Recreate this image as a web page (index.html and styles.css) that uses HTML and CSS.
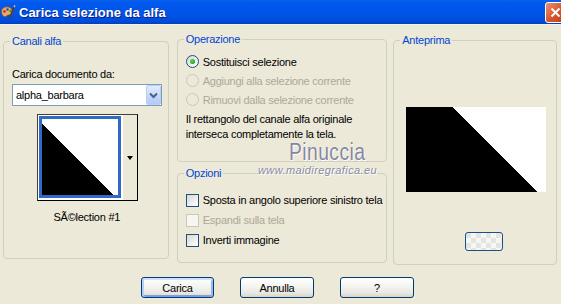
FILE: index.html
```html
<!DOCTYPE html>
<html lang="it">
<head>
  <meta charset="UTF-8" />
  <title>Carica selezione da alfa</title>
  <link rel="stylesheet" href="styles.css">
</head>
<body>
<div class="window">

  <div class="titlebar">
    <svg class="app-icon" width="16" height="16" viewBox="0 0 16 16">
      <path d="M1.5 9 C0.5 5 4.5 2 8.5 3 C12.5 4 13.5 8 11.5 10 C9.5 12 8.5 10 6.5 12 C4.5 14 2.5 12 1.5 9Z" fill="#e6ac6a" stroke="#7a4a20" stroke-width="0.8"/>
      <circle cx="4.5" cy="7.5" r="1.3" fill="#d42020"/>
      <circle cx="7.5" cy="5.5" r="1.3" fill="#2050d0"/>
      <circle cx="10.5" cy="7" r="1.2" fill="#1fa01f"/>
      <path d="M9.5 14 L14.5 2" stroke="#5a3a1a" stroke-width="1.6"/>
      <path d="M14 1 L15.5 1.5 L14.8 3.5 L13.6 3Z" fill="#c0c0c0"/>
    </svg>
    <span class="title">Carica selezione da alfa</span>
    <div class="close-btn">
      <svg width="11" height="11" viewBox="0 0 11 11"><path d="M1.5 1.5L9.5 9.5M9.5 1.5L1.5 9.5" stroke="#fff" stroke-width="2"/></svg>
    </div>
  </div>

  <div class="client">
    <div class="columns">

      <!-- Canali alfa -->
      <fieldset class="group channels">
        <legend>Canali alfa</legend>
        <div class="field-label">Carica documento da:</div>
        <div class="combo">
          <span class="combo-text">alpha_barbara</span>
          <span class="combo-btn">
            <svg width="15" height="20" viewBox="0 0 15 20"><path d="M4 8.5 L7.5 12 L11 8.5" fill="none" stroke="#4d6185" stroke-width="2"/></svg>
          </span>
        </div>
        <div class="thumb">
          <div class="thumb-pick">
            <svg class="thumb-img" width="76" height="76" viewBox="0 0 76 76" shape-rendering="crispEdges">
              <rect width="76" height="76" fill="#fff"/>
              <polygon points="0,5 71,76 0,76" fill="#000"/>
            </svg>
          </div>
          <div class="thumb-drop"><span class="arrow"></span></div>
        </div>
        <div class="thumb-caption">SÃ©lection #1</div>
      </fieldset>

      <div class="middle">
        <!-- Operazione -->
        <fieldset class="group operation">
          <legend>Operazione</legend>
          <div class="option first"><span class="radio checked"></span>Sostituisci selezione</div>
          <div class="option disabled"><span class="radio"></span>Aggiungi alla selezione corrente</div>
          <div class="option disabled"><span class="radio"></span>Rimuovi dalla selezione corrente</div>
          <p class="note">Il rettangolo del canale alfa originale<br>interseca completamente la tela.</p>
        </fieldset>

        <!-- Opzioni -->
        <fieldset class="group options">
          <legend>Opzioni</legend>
          <div class="check-row first"><span class="check"></span>Sposta in angolo superiore sinistro tela</div>
          <div class="check-row disabled"><span class="check"></span>Espandi sulla tela</div>
          <div class="check-row"><span class="check"></span>Inverti immagine</div>
        </fieldset>
      </div>

      <!-- Anteprima -->
      <fieldset class="group preview">
        <legend>Anteprima</legend>
        <svg class="preview-img" width="140" height="85" viewBox="0 0 140 85" shape-rendering="crispEdges">
          <rect width="140" height="85" fill="#fff"/>
          <polygon points="0,0 46,0 131,85 0,85" fill="#000"/>
        </svg>
        <div class="bg-btn"></div>
      </fieldset>
    </div>

    <div class="buttons">
      <button class="btn default">Carica</button>
      <button class="btn wide">Annulla</button>
      <button class="btn wide">?</button>
    </div>
  </div>

  <div class="watermark">
    <div class="wm-name">Pinuccia</div>
    <div class="wm-url">www.maidiregrafica.eu</div>
  </div>

</div>
</body>
</html>
```

FILE: styles.css
```css
body {
  margin: 0;
  background: #ece9d8;
  font-family: "Liberation Sans", Arial, sans-serif;
  font-size: 11px;
  letter-spacing: -0.25px;
  color: #000;
}

.window {
  position: relative;
  width: 561px;
  height: 304px;
  overflow: hidden;
}

/* title bar */
.titlebar {
  height: 25px;
  display: flex;
  align-items: center;
  overflow: hidden;
  background: linear-gradient(to bottom, #0b62ee 0%, #0058ee 12%, #0055e8 55%, #004bd9 88%, #003fc2 100%);
  border-bottom: 1px solid #f4f2e8;
  box-sizing: border-box;
}

.app-icon {
  display: block;
  margin-right: 3px;
}

.title {
  color: #fff;
  font-weight: bold;
  font-size: 13px;
  letter-spacing: 0;
  text-shadow: 1px 1px #0c1b8a;
}

.close-btn {
  margin-left: auto;
  margin-right: -5px;
  width: 21px;
  height: 21px;
  box-sizing: border-box;
  border: 1px solid #fff;
  border-radius: 3px;
  background: linear-gradient(135deg, #ec9272, #d8532b 55%, #bd3d16);
  display: flex;
  align-items: center;
  justify-content: center;
}

/* dialog body */
.client {
  padding: 8px 4px 0 3px;
}

.columns {
  display: flex;
  align-items: flex-start;
}

.group {
  margin: 0;
  padding: 0 8px;
  border: 1px solid #d0d0bf;
  border-radius: 4px;
  box-sizing: border-box;
  min-width: 0;
}

.group legend {
  color: #0046d5;
  padding: 0 2px;
  margin-left: -2px;
  line-height: 13px;
}

.channels {
  width: 166px;
  height: 224px;
  margin-top: 2px;
  padding-right: 6px;
}

.middle {
  width: 211px;
  margin-left: 8px;
  display: flex;
  flex-direction: column;
}

.operation {
  height: 129px;
}

.options {
  height: 96px;
  margin-top: 5px;
  padding-right: 2px;
}

.preview {
  width: 164px;
  height: 231px;
  margin-left: 6px;
  margin-top: 1px;
}

/* canali alfa */
.field-label {
  margin-top: 20px;
  line-height: 13px;
}

.combo {
  margin-top: 3px;
  height: 22px;
  box-sizing: border-box;
  border: 1px solid #7f9db9;
  background: #fff;
  display: flex;
  align-items: center;
}

.combo-text {
  flex: 1;
  padding-left: 3px;
}

.combo-btn {
  width: 15px;
  height: 20px;
  box-sizing: border-box;
  border: 1px solid #b8cdf8;
  border-radius: 2px;
  background: linear-gradient(to bottom, #e3ecfe, #c3d5fc 60%, #b3c9f8);
}

.combo-btn svg {
  display: block;
  margin: -1px 0 0 -1px;
}

.thumb {
  margin: 8px 0 0 25px;
  width: 101px;
  height: 87px;
  box-sizing: border-box;
  display: flex;
  border: 1px solid #000;
  border-color: #404040 #000 #000 #404040;
}

.thumb-pick {
  background: #fff;
  padding: 1px 1px 2px 1px;
}

.thumb-img {
  display: block;
  border: 3px solid #316ac5;
}

.thumb-drop {
  flex: 1;
  background: #ece9d8;
  border-left: 1px solid #fff;
  display: flex;
  align-items: center;
  justify-content: center;
}

.arrow {
  width: 0;
  height: 0;
  border-left: 3.5px solid transparent;
  border-right: 3.5px solid transparent;
  border-top: 4px solid #000;
}

.thumb-caption {
  margin-top: 10px;
  text-align: center;
  line-height: 13px;
}

/* operazione */
.option {
  display: flex;
  align-items: center;
  height: 19px;
  white-space: nowrap;
}

.option.first {
  margin-top: 6px;
}

.radio {
  position: relative;
  flex: none;
  width: 13px;
  height: 13px;
  box-sizing: border-box;
  margin-right: 4px;
  border: 1px solid #1c5180;
  border-radius: 50%;
  background: linear-gradient(135deg, #d8d7d0, #fff);
}

.radio.checked::after {
  content: "";
  position: absolute;
  left: 3px;
  top: 3px;
  width: 5px;
  height: 5px;
  border-radius: 50%;
  background: radial-gradient(circle at 40% 40%, #5ddc59, #21a121 70%);
}

.disabled {
  color: #aca899;
}

.option.disabled .radio {
  border-color: #cac8bb;
  background: #ece9d8;
}

.note {
  margin: 3px 0 0;
  line-height: 15px;
  white-space: nowrap;
}

/* opzioni */
.check-row {
  display: flex;
  align-items: center;
  height: 20px;
  white-space: nowrap;
}

.check-row.first {
  margin-top: 10px;
}

.check {
  flex: none;
  width: 13px;
  height: 13px;
  box-sizing: border-box;
  margin-right: 4px;
  border: 1px solid #1c5180;
  background: linear-gradient(135deg, #d8d7d0, #fff);
}

.check-row.disabled .check {
  border-color: #cac8bb;
  background: #f7f6f1;
}

/* anteprima */
.preview-img {
  display: block;
  margin: 60px 0 0 4px;
}

.bg-btn {
  width: 38px;
  height: 19px;
  box-sizing: border-box;
  margin: 40px 0 0 63px;
  border: 1px solid #1c4f86;
  border-radius: 3px;
  background: repeating-conic-gradient(#f6f6f4 0 25%, #e4e4e0 0 50%) 0 0 / 10px 10px;
}

/* bottoni */
.buttons {
  display: flex;
  justify-content: center;
  gap: 26px;
  margin-top: 12px;
  padding-right: 5px;
}

.btn {
  width: 73px;
  height: 21px;
  padding: 0;
  font: inherit;
  letter-spacing: inherit;
  color: #000;
  border: 1px solid #003c74;
  border-radius: 3px;
  background: linear-gradient(to bottom, #fff 0%, #f4f4f0 45%, #e8e7e0 80%, #d8d3c8 100%);
}

.btn.wide {
  width: 74px;
}

.btn.default {
  box-shadow: inset 0 2px 0 #cde1fb, inset 2px 0 0 #b7cff5, inset -2px 0 0 #9bb8ee, inset 0 -2px 0 #7d9ee6;
}

/* filigrana */
.watermark {
  position: absolute;
  left: 258px;
  top: 139px;
  color: #85889f;
  text-shadow: 0 0 1px #fff, 1px 1px 0 #fff;
}

.wm-name {
  margin-left: 31px;
  font-size: 23px;
  line-height: 27px;
  letter-spacing: 0.5px;
  transform: scaleX(0.84);
  transform-origin: left;
}

.wm-url {
  margin-top: -2px;
  font-size: 11px;
  font-style: italic;
  letter-spacing: 0.4px;
  line-height: 12px;
}
```
